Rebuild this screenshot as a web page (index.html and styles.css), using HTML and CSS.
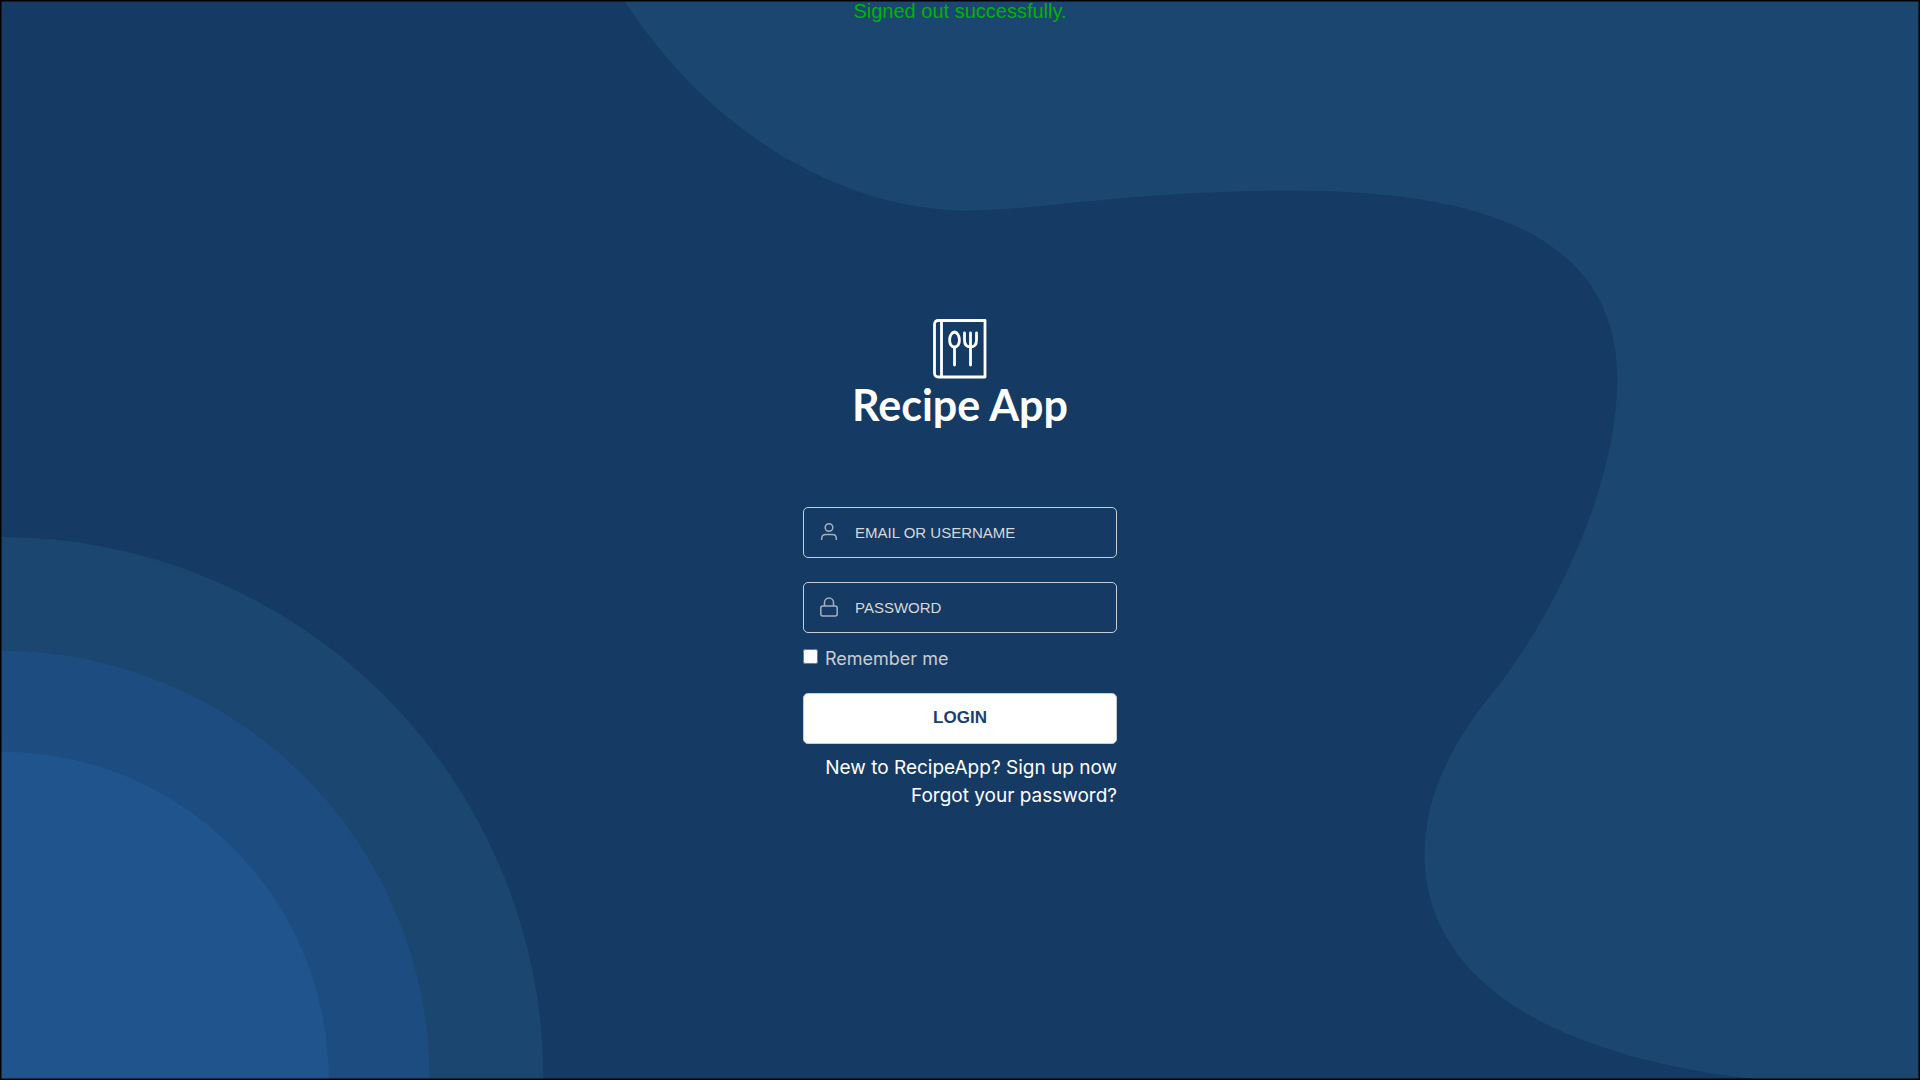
FILE: index.html
```html
<!DOCTYPE html>
<html lang="en">
<head>
<meta charset="utf-8">
<title>Recipe App</title>
<link rel="stylesheet" href="styles.css">
</head>
<body>
<svg class="backdrop" viewBox="0 0 1920 1080" preserveAspectRatio="none" aria-hidden="true">
  <path class="wave" d="M624 0C705 125 835 210 970 210C1035 210 1130 190 1295 190C1510 190 1618 250 1618 379C1618 480 1560 610 1491 696C1450 746 1425 800 1425 854C1425 975 1540 1055 1754 1080H1920V0Z"/>
  <circle class="wave" cx="0" cy="1080" r="543"/>
  <circle class="ring" cx="0" cy="1080" r="429"/>
  <circle class="core" cx="0" cy="1080" r="328"/>
</svg>
<p class="flash" role="status">Signed out successfully.</p>
<main class="login">
  <header class="brand">
    <svg class="brand-icon" viewBox="0 0 54 60" aria-hidden="true">
      <path d="M52 1.500H5.500Q1.500 1.500 1.500 5.500V54Q1.500 58 5.500 58H52ZM8.500 1.500V58"/>
      <path d="M21.500 29V46M21.500 28C14.500 28 15.500 14 21.500 13C27.500 14 28.500 28 21.500 28ZM37.500 14V46M31.500 14V21Q31.500 28 37.500 28Q43.500 28 43.500 21V14"/>
    </svg>
    <h1 class="brand-name">Recipe App</h1>
  </header>
  <form class="form">
    <div class="field">
      <svg class="field-icon" viewBox="0 0 20 20" aria-hidden="true"><circle cx="10" cy="5.500" r="3.800"/><path d="M2.700 18V16.500Q2.700 12.500 6.700 12.500H13.300Q17.300 12.500 17.300 16.500V18"/></svg>
      <input class="field-input" type="text" placeholder="EMAIL OR USERNAME" aria-label="Email or username">
    </div>
    <div class="field">
      <svg class="field-icon" viewBox="0 0 20 20" aria-hidden="true"><rect x="1.800" y="9" width="16.400" height="10" rx="2"/><path d="M5.500 9V5.500A4.500 4.500 0 0 1 14.500 5.500V9"/></svg>
      <input class="field-input" type="password" placeholder="PASSWORD" aria-label="Password">
    </div>
    <div class="remember">
      <input class="remember-box" type="checkbox" id="remember">
      <label for="remember">Remember me</label>
    </div>
    <button class="submit" type="submit">LOGIN</button>
  </form>
  <nav class="links">
    <a href="#signup">New to RecipeApp? Sign up now</a>
    <a href="#reset">Forgot your password?</a>
  </nav>
</main>
</body>
</html>
```
FILE: styles.css
```css
* {
  box-sizing: border-box;
}

body {
  position: relative;
  display: flex;
  flex-direction: column;
  align-items: center;
  min-height: 100vh;
  margin: 0;
  border: 1px solid #000;
  box-shadow: inset 0 0 0 1px rgba(0, 0, 0, 0.5);
  background: #153a64;
  color: #fff;
  font-family: "Liberation Sans", sans-serif;
}

.backdrop {
  position: absolute;
  inset: 0;
  z-index: -1;
  width: 100%;
  height: 100%;
}

.wave {
  fill: #1b4670;
}

.ring {
  fill: #1d4d80;
}

.core {
  fill: #20548d;
}

.flash {
  margin: 0;
  color: #00b400;
  font-size: 20px;
  line-height: 20px;
}

.login {
  display: flex;
  flex: 1;
  flex-direction: column;
  justify-content: center;
  width: 314px;
  padding-top: 28px;
}

.brand {
  display: flex;
  flex-direction: column;
  align-items: center;
  margin-bottom: 76px;
}

.brand-icon {
  width: 54px;
  height: 60px;
  fill: none;
  stroke: #fff;
  stroke-width: 2.8;
  stroke-linecap: round;
  stroke-linejoin: round;
}

.brand-name {
  margin: 0;
  font-family: Lato, sans-serif;
  font-size: 43px;
  font-weight: 700;
  line-height: 52px;
  white-space: nowrap;
}

.form {
  display: flex;
  flex-direction: column;
}

.field {
  display: flex;
  align-items: center;
  gap: 16px;
  height: 51px;
  margin-bottom: 24px;
  padding: 0 15px;
  border: 1px solid #c5ced8;
  border-radius: 5px;
}

.field + .field {
  margin-bottom: 16px;
}

.field-icon {
  flex: none;
  width: 20px;
  height: 20px;
  fill: none;
  stroke: #a2b0c1;
  stroke-width: 1.5;
}

.field-input {
  flex: 1;
  min-width: 0;
  padding: 0;
  border: 0;
  outline: 0;
  background: transparent;
  color: #fff;
  font: 15px "Liberation Sans", sans-serif;
}

.field-input::placeholder {
  color: #d8d8d8;
  opacity: 1;
}

.remember {
  display: flex;
  gap: 7px;
  height: 44px;
  color: #c8cdd3;
  font-family: Inter, sans-serif;
  font-size: 18px;
  line-height: 20px;
}

.remember-box {
  width: 15px;
  height: 15px;
  margin: 0;
}

.submit {
  height: 51px;
  border: 1px solid #c5ced8;
  border-radius: 5px;
  background: #fff;
  color: #1b4070;
  font: bold 17px "Liberation Sans", sans-serif;
}

.links {
  display: flex;
  flex-direction: column;
  align-items: flex-end;
  margin-top: 10px;
  font-family: Inter, sans-serif;
  font-size: 19px;
  line-height: 28px;
}

.links a {
  color: #fff;
  text-decoration: none;
  white-space: nowrap;
}
```
